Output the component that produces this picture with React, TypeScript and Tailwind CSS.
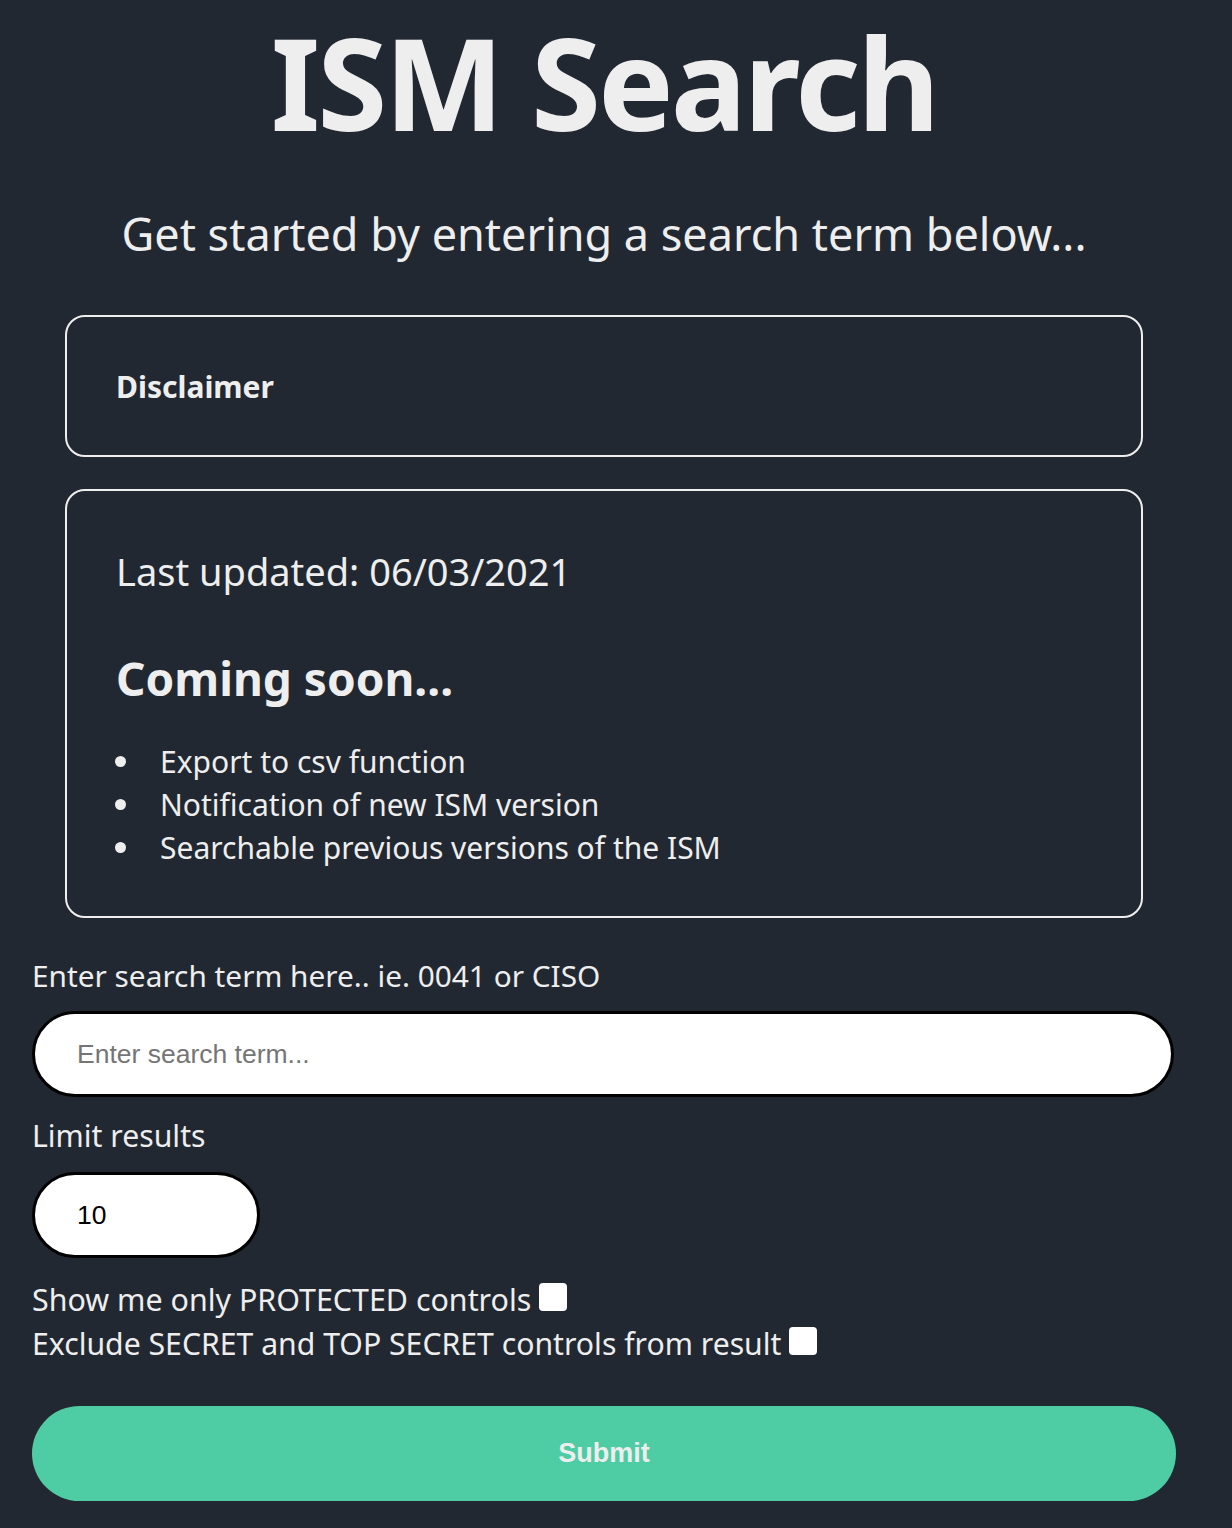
import React from "react";

const items = [
  "Export to csv function",
  "Notification of new ISM version",
  "Searchable previous versions of the ISM",
];

const App = () => {
  return (
    <div className="min-h-screen w-full bg-[#222831] text-[#eeeeee]" style={{ fontFamily: '"Noto Sans", "Open Sans", sans-serif' }}>
      <div className="w-[1208px] px-8 pb-7">
        <h1 className="-mt-[5px] text-center text-[127px] font-bold leading-[174px] tracking-[-3px]">ISM Search</h1>
        <p className="mt-[30px] text-center text-[45px] leading-[70px]">Get started by entering a search term below...</p>

        <div className="mx-[33px] mt-[46px] rounded-[20px] border-2 border-[#eeeeee] px-[49px] pt-[49px] pb-[48px]">
          <h3 className="text-[30px] font-bold leading-[41px]">Disclaimer</h3>
        </div>

        <div className="mx-[33px] mt-[32px] rounded-[20px] border-2 border-[#eeeeee] px-[49px] pt-[52px] pb-[47px]">
          <p className="text-[38px] leading-[56px]">Last updated: 06/03/2021</p>
          <h2 className="mt-[49px] text-[46px] font-bold leading-[60px]">Coming soon...</h2>
          <ul className="mt-[32px] text-[30px] leading-[43px]">
            {items.map((t) => (
              <li key={t} className="flex items-center">
                <span className="ml-[-1px] mr-[34px] inline-block h-[11px] w-[11px] rounded-full bg-[#eeeeee]" />
                <span>{t}</span>
              </li>
            ))}
          </ul>
        </div>

        <form className="mt-[36px]">
          <label className="block text-[29.8px] leading-[43px]">Enter search term here.. ie. 0041 or CISO</label>
          <input
            type="text"
            placeholder="Enter search term..."
            className="mt-[14px] block h-[86px] w-[1142px] rounded-full border-[3px] border-black bg-white px-[42px] text-[26.5px] text-black placeholder:text-[#757575]"
            style={{ fontFamily: '"Liberation Sans", Arial, sans-serif' }}
          />
          <label className="mt-[17px] block text-[30.2px] leading-[43px]">Limit results</label>
          <input
            type="number"
            defaultValue={10}
            className="mt-[15px] block h-[86px] w-[228px] rounded-full border-[3px] border-black bg-white px-[42px] text-[26.5px] text-black"
            style={{ fontFamily: '"Liberation Sans", Arial, sans-serif' }}
          />
          <div className="mt-[20px] flex items-center text-[30.4px] leading-[44px]">
            <span>Show me only PROTECTED controls</span>
            <span className="ml-[8px] mb-[6px] inline-block h-[28px] w-[28px] rounded-[4px] bg-white" />
          </div>
          <div className="flex items-center text-[30.2px] leading-[44px]">
            <span>Exclude SECRET and TOP SECRET controls from result</span>
            <span className="ml-[8px] mb-[6px] inline-block h-[28px] w-[28px] rounded-[4px] bg-white" />
          </div>
          <button
            type="button"
            className="mt-[40px] block h-[95px] w-[1144px] rounded-full bg-[#4ecca3] text-[27px] font-bold text-[#eeeeee]"
            style={{ fontFamily: '"Liberation Sans", Arial, sans-serif' }}
          >
            Submit
          </button>
        </form>
      </div>
    </div>
  );
};

export default App;
